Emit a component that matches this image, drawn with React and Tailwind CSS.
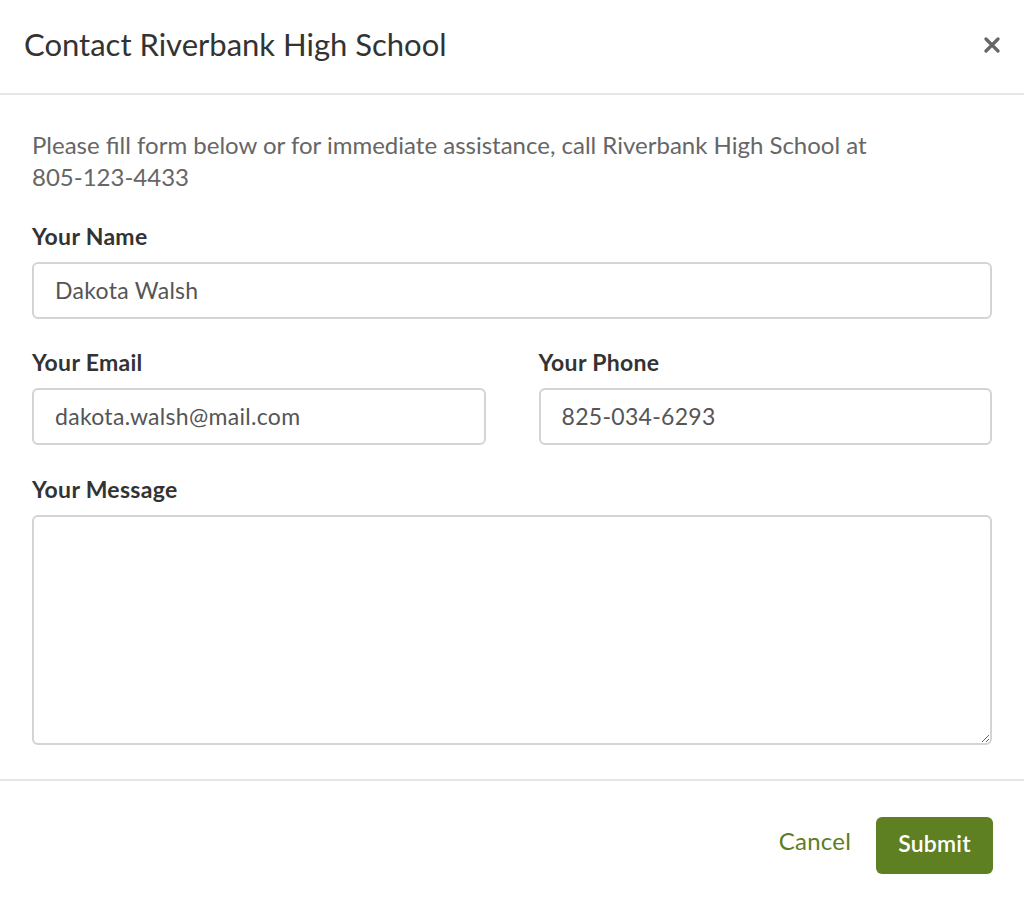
import React from "react";

const font = { fontFamily: '"Lato", "Open Sans", Arial, sans-serif' };

const Field = ({ label, value, className = "" }) => (
  <div className={className}>
    <label className="block text-[23px] leading-[26px] font-bold tracking-[0.3px] text-[#333]">
      {label}
    </label>
    <div className="mt-[13px] h-[57px] rounded-[6px] border-2 border-[#d4d4d4] bg-white px-[21px] flex items-center text-[23px] tracking-[0.3px] text-[#555]">
      {value}
    </div>
  </div>
);

export default function App() {
  return (
    <div className="w-[1024px] h-[905px] bg-white flex flex-col" style={font}>
      <div className="h-[95px] border-b-2 border-[#e6e6e6] flex items-center justify-between pl-[24px] pr-[24px]">
        <h1 className="text-[31px] text-[#333] font-normal pb-[4px]">
          Contact Riverbank High School
        </h1>
        <button className="text-[#666] mb-[4px]">
          <svg width="16" height="16" viewBox="0 0 16 16">
            <path
              d="M2 2 L14 14 M14 2 L2 14"
              stroke="#666"
              strokeWidth="3.2"
              strokeLinecap="round"
            />
          </svg>
        </button>
      </div>

      <div className="px-[32px] pt-[34px] pb-[34px] border-b-2 border-[#e6e6e6]">
        <p className="text-[24px] leading-[32px] text-[#666]">
          Please fill form below or for immediate assistance, call Riverbank High
          School at <span className="whitespace-nowrap">805-123-4433</span>
        </p>

        <Field label="Your Name" value="Dakota Walsh" className="mt-[30px]" />

        <div className="mt-[30px] grid grid-cols-2 gap-[53px]">
          <Field label="Your Email" value="dakota.walsh@mail.com" />
          <Field label="Your Phone" value="825-034-6293" />
        </div>

        <div className="mt-[31px]">
          <label className="block text-[23px] leading-[26px] font-bold tracking-[0.3px] text-[#333]">
            Your Message
          </label>
          <textarea className="mt-[13px] block w-full h-[230px] rounded-[6px] border-2 border-[#d4d4d4] bg-white outline-none" />
        </div>
      </div>

      <div className="flex items-center justify-end gap-[25px] px-[31px] pt-[36px]">
        <button className="pb-[9px] text-[24px] text-[#5e7d22] tracking-[0.2px]">
          Cancel
        </button>
        <button className="h-[57px] w-[117px] pb-[4px] rounded-[6px] bg-[#5f7f23] text-white text-[23px] font-semibold tracking-[0.2px]">
          Submit
        </button>
      </div>
    </div>
  );
}
